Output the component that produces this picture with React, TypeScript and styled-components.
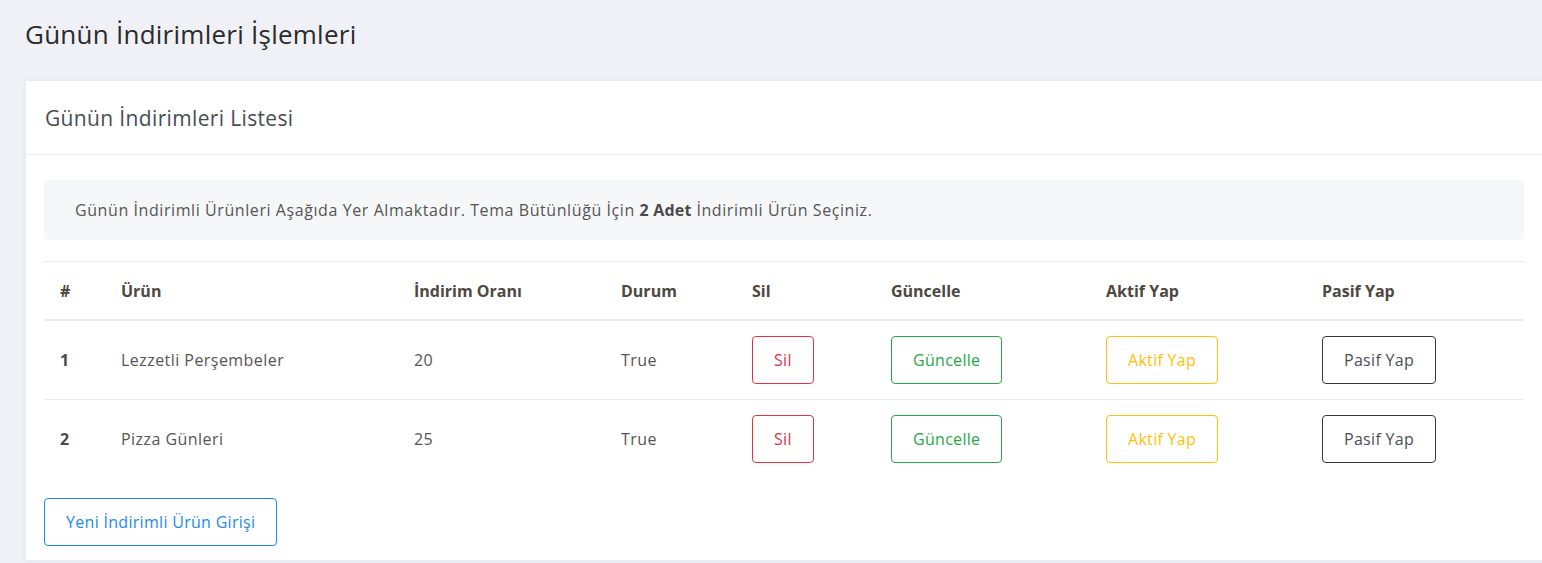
import React from "react";
import styled, { createGlobalStyle, css } from "styled-components";

const Global = createGlobalStyle`
  html, body { margin: 0; padding: 0; }
  body {
    background: #f0f1f7;
    font-family: "Open Sans", "Noto Sans", sans-serif;
    color: #555;
    overflow: hidden;
  }
`;

const Page = styled.div`
  padding: 14px 0 0 26px;
  height: 563px;
  box-sizing: border-box;
`;

const Title = styled.h1`
  margin: 0 0 0 -1px;
  font-size: 26px;
  font-weight: 400;
  letter-spacing: 0.25px;
  line-height: 40px;
  color: #2b2b2b;
  height: 67px;
`;

const Card = styled.section`
  background: #fff;
  box-shadow: 0 0 6px rgba(30, 40, 90, 0.07);
  display: flex;
  flex-direction: column;
`;

const CardHeader = styled.header`
  padding: 0 19px;
  height: 73px;
  display: flex;
  align-items: center;
  border-bottom: 1px solid #e9e9ef;
  font-size: 21px;
  letter-spacing: 0.35px;
  color: #474d55;
`;

const CardBody = styled.div`
  padding: 25px 18px 14px 18px;
`;

const Alert = styled.div`
  background: #f6f7f9;
  border-radius: 5px;
  padding: 18px 31px;
  font-size: 16px;
  line-height: 24px;
  letter-spacing: 0.58px;
  color: #555;
  margin-bottom: 21px;
  b { font-weight: 700; color: #4a4a4a; letter-spacing: 0.2px; }
`;

const Table = styled.table`
  width: 100%;
  border-collapse: collapse;
  table-layout: fixed;
  font-size: 16px;
  margin-bottom: 20px;
`;

const Th = styled.th`
  text-align: left;
  font-weight: 700;
  color: #4d4840;
  padding: 17px 16px 16px;
  line-height: 24px;
  border-top: 1px solid #ebebef;
  border-bottom: 2px solid #ebebef;
`;

const Td = styled.td<{ $bold?: boolean }>`
  padding: 15px 16px;
  line-height: 24px;
  letter-spacing: 0.45px;
  border-top: 1px solid #ebebef;
  color: #555;
  vertical-align: middle;
  ${(p) =>
    p.$bold &&
    css`
      font-weight: 700;
      color: #4a4a4a;
    `}
`;

const tones = {
  red: "#dc3545",
  green: "#28a745",
  yellow: "#ffc107",
  dark: "#343a40",
  blue: "#1e88f0",
};

type Tone = keyof typeof tones;

const OutlineButton = styled.button<{ $tone: Tone }>`
  font-family: inherit;
  font-size: 16px;
  line-height: 24px;
  letter-spacing: 0.3px;
  padding: 11px 21px;
  background: #fff;
  border-radius: 4px;
  border: 1px solid ${(p) => tones[p.$tone]};
  color: ${(p) => (p.$tone === "dark" ? "#4a4f55" : tones[p.$tone])};
  cursor: pointer;
  white-space: nowrap;
`;

const rows = [
  { id: 1, name: "Lezzetli Perşembeler", rate: 20, status: "True" },
  { id: 2, name: "Pizza Günleri", rate: 25, status: "True" },
];

const widths = [61, 293, 207, 131, 139, 215, 216, 218];

export default function App() {
  return (
    <>
      <Global />
      <Page>
        <Title>Günün İndirimleri İşlemleri</Title>
        <Card>
          <CardHeader>Günün İndirimleri Listesi</CardHeader>
          <CardBody>
            <Alert>
              Günün İndirimli Ürünleri Aşağıda Yer Almaktadır. Tema Bütünlüğü İçin <b>2 Adet</b> İndirimli Ürün Seçiniz.
            </Alert>
            <Table>
              <colgroup>
                {widths.map((w, i) => (
                  <col key={i} style={{ width: w }} />
                ))}
              </colgroup>
              <thead>
                <tr>
                  <Th>#</Th>
                  <Th>Ürün</Th>
                  <Th>İndirim Oranı</Th>
                  <Th>Durum</Th>
                  <Th>Sil</Th>
                  <Th>Güncelle</Th>
                  <Th>Aktif Yap</Th>
                  <Th>Pasif Yap</Th>
                </tr>
              </thead>
              <tbody>
                {rows.map((r) => (
                  <tr key={r.id}>
                    <Td $bold>{r.id}</Td>
                    <Td>{r.name}</Td>
                    <Td>{r.rate}</Td>
                    <Td>{r.status}</Td>
                    <Td>
                      <OutlineButton $tone="red">Sil</OutlineButton>
                    </Td>
                    <Td>
                      <OutlineButton $tone="green">Güncelle</OutlineButton>
                    </Td>
                    <Td>
                      <OutlineButton $tone="yellow">Aktif Yap</OutlineButton>
                    </Td>
                    <Td>
                      <OutlineButton $tone="dark">Pasif Yap</OutlineButton>
                    </Td>
                  </tr>
                ))}
              </tbody>
            </Table>
            <OutlineButton $tone="blue">Yeni İndirimli Ürün Girişi</OutlineButton>
          </CardBody>
        </Card>
      </Page>
    </>
  );
}
